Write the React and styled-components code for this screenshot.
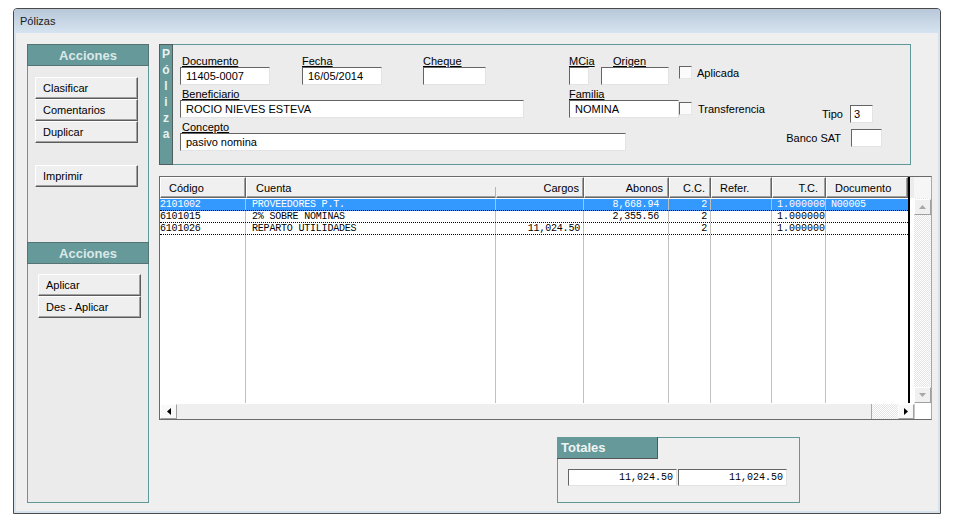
import React from "react";
import styled, { createGlobalStyle } from "styled-components";

const TEAL = "#669999";
const TEAL_BORDER = "#5f9898";
const SANS = `"Liberation Sans", Arial, sans-serif`;
const MONO = `"Liberation Mono", "Courier New", monospace`;

const GlobalStyle = createGlobalStyle`
  html, body { margin: 0; padding: 0; background: #fff; }
  body { font-family: ${SANS}; font-size: 11px; color: #000; }
  * { box-sizing: border-box; }
`;

const Window = styled.div`
  margin: 8px 0 0 13px;
  width: 928px;
  height: 506px;
  border: 1px solid #4a4a4a;
  border-radius: 4px 4px 0 0;
  background: #d8e2ec;
  display: flex;
  flex-direction: column;
  overflow: hidden;
`;

const TitleBar = styled.div`
  height: 24px;
  flex: none;
  background: linear-gradient(#b8c8d9, #d6e3f0);
  display: flex;
  align-items: center;
  padding-left: 6px;
  font-size: 11px;
  color: #1a1a1a;
`;

const Body = styled.div`
  flex: 1;
  margin: 0 2px 2px 2px;
  background: #efefef;
  display: flex;
  align-items: flex-start;
  padding: 11px 6px 0 11px;
`;

/* ---------- Left side panel ---------- */
const SidePanel = styled.div`
  width: 122px;
  height: 459px;
  flex: none;
  border: 1px solid ${TEAL_BORDER};
  background: #ebebeb;
  display: flex;
  flex-direction: column;
`;

const PanelHeader = styled.div`
  height: 22px;
  flex: none;
  margin: -1px -1px 0;
  background: ${TEAL};
  border: 1px solid #557373;
  color: #dbe9e9;
  font-weight: bold;
  font-size: 13px;
  display: flex;
  align-items: center;
  justify-content: center;
`;

const ButtonStack = styled.div`
  display: flex;
  flex-direction: column;
  flex: none;
  height: ${(p) => (p.$height ? `${p.$height}px` : "auto")};
  padding: ${(p) => p.$top}px 0 0 ${(p) => p.$left}px;
`;

const ActionButton = styled.div`
  width: 103px;
  height: 22px;
  flex: none;
  margin-top: ${(p) => p.$gap || 0}px;
  background: #efefef;
  border: 1px solid;
  border-color: #ffffff #5c5c5c #5c5c5c #ffffff;
  box-shadow: inset -1px -1px 0 #a0a0a0;
  font-family: ${SANS};
  font-size: 11px;
  color: #000;
  padding-left: 7px;
  display: flex;
  align-items: center;
`;

/* ---------- Main column ---------- */
const Main = styled.div`
  margin-left: 10px;
  display: flex;
  flex-direction: column;
`;

const PolizaPanel = styled.div`
  display: flex;
  width: 752px;
  height: 121px;
  flex: none;
`;

const Strip = styled.div`
  width: 14px;
  flex: none;
  background: ${TEAL};
  border: 1px solid #4f5d5d;
  display: flex;
  flex-direction: column;
  align-items: center;
  padding-top: 1px;
  color: #e8f2f2;
  font-weight: bold;
  font-size: 12px;
  line-height: 16px;
`;

const FormArea = styled.div`
  flex: 1;
  border: 1px solid ${TEAL_BORDER};
  border-left: none;
  background: #ececec;
  padding: 10px 0 0 7px;
  display: flex;
  flex-direction: column;
  gap: 3px;
`;

const FormRow = styled.div`
  display: flex;
  align-items: flex-end;
  height: 30px;
`;

const Field = styled.div`
  display: flex;
  flex-direction: column;
  flex: none;
  width: ${(p) => p.$w}px;
  margin-left: ${(p) => p.$ml || 0}px;
`;

const FieldLabel = styled.div`
  height: 12px;
  line-height: 12px;
  font-size: 11px;
  text-decoration: underline;
  text-underline-offset: 1px;
  padding-left: ${(p) => p.$indent || 0}px;
  white-space: nowrap;
  overflow: visible;
`;

const TextBox = styled.div`
  width: ${(p) => p.$w}px;
  height: ${(p) => p.$h || 18}px;
  flex: none;
  background: #fff;
  border: 1px solid;
  border-color: #646464 #e3e3e3 #e3e3e3 #646464;
  font-family: ${(p) => (p.$mono ? MONO : SANS)};
  font-size: ${(p) => (p.$mono ? "10px" : "11px")};
  padding: 0 ${(p) => (p.$right ? 3 : 0)}px 0 ${(p) => p.$pad ?? 5}px;
  display: flex;
  align-items: center;
  justify-content: ${(p) => (p.$right ? "flex-end" : "flex-start")};
  white-space: nowrap;
  overflow: hidden;
`;

const CheckItem = styled.div`
  display: flex;
  align-items: center;
  gap: ${(p) => p.$gap}px;
  margin-left: ${(p) => p.$ml || 0}px;
  margin-bottom: ${(p) => p.$mb || 0}px;
  font-size: 11px;
  white-space: nowrap;
`;

const CheckBox = styled.div`
  width: 13px;
  height: 13px;
  background: #fbfbfb;
  border: 1px solid;
  border-color: #646464 #e6e6e6 #e6e6e6 #646464;
`;

const InlineField = styled.div`
  display: flex;
  align-items: center;
  gap: ${(p) => p.$gap}px;
  margin-left: auto;
  margin-right: ${(p) => p.$mr}px;
  margin-bottom: ${(p) => p.$mb}px;
  font-size: 11px;
  white-space: nowrap;
`;

/* ---------- Grid ---------- */
const GridFrame = styled.div`
  margin-top: 11px;
  width: 773px;
  height: 244px;
  border: 1px solid #6a6a6a;
  border-right-color: #a8a8a8;
  background: #fff;
  display: flex;
  flex-direction: column;
`;

const GridTop = styled.div`
  flex: 1;
  display: flex;
  min-height: 0;
`;

const Table = styled.div`
  width: 748px;
  display: flex;
  flex-direction: column;
`;

const HeadRow = styled.div`
  height: 21px;
  display: flex;
  flex: none;
  background: #f0f0f0;
`;

const HeadCell = styled.div`
  position: relative;
  width: ${(p) => p.$w}px;
  flex: none;
  background: #f0f0f0;
  border-top: 1px solid #fff;
  border-left: 1px solid ${(p) => (p.$noLeft ? "#f0f0f0" : "#fff")};
  border-right: 1px solid ${(p) => (p.$noRight ? "#f0f0f0" : "#646464")};
  border-bottom: 1px solid #646464;
  box-shadow: inset 0 -1px 0 #a0a0a0
    ${(p) => (p.$noRight ? "" : ", inset -1px 0 0 #a0a0a0")};
  display: flex;
  align-items: center;
  justify-content: ${(p) => (p.$align === "right" ? "flex-end" : "flex-start")};
  padding: 0 ${(p) => (p.$align === "right" ? p.$pad : 0)}px 0
    ${(p) => (p.$align === "right" ? 0 : p.$pad)}px;
  font-size: 11px;
  white-space: nowrap;
  &::after {
    content: "";
    display: ${(p) => (p.$tick ? "block" : "none")};
    position: absolute;
    right: -1px;
    bottom: 0;
    width: 1px;
    height: 10px;
    background: #b4b4b4;
  }
`;

const Rows = styled.div`
  flex: 1;
  display: flex;
  flex-direction: column;
  padding-top: 1px;
`;

const DataRow = styled.div`
  display: flex;
  height: 12px;
  flex: none;
  border-bottom: 1px dotted #000;
  background: ${(p) => (p.$selected ? "#3399ff" : "#fff")};
  color: ${(p) => (p.$selected ? "#fff" : "#000")};
`;

const FillerRow = styled.div`
  display: flex;
  flex: 1;
`;

const DataCell = styled.div`
  width: ${(p) => p.$w}px;
  flex: none;
  border-right: 1px solid ${(p) => (p.$last ? "transparent" : "#c0c0c0")};
  font-family: ${MONO};
  font-size: 10px;
  letter-spacing: ${(p) => (p.$tight ? "-0.2px" : "0")};
  line-height: 11px;
  white-space: nowrap;
  overflow: hidden;
  text-align: ${(p) => p.$align};
  padding: 0 ${(p) => (p.$align === "right" ? p.$pad : 0)}px 0
    ${(p) => (p.$align === "right" ? 0 : p.$pad)}px;
`;

const BlackLine = styled.div`
  width: 2px;
  flex: none;
  background: #000;
`;

const SideCol = styled.div`
  width: 21px;
  flex: none;
  display: flex;
  flex-direction: column;
`;

const SideHead = styled.div`
  height: 21px;
  flex: none;
  background: linear-gradient(to right, #ececec 0 4px, #f6f6f6 4px);
`;

const SideBody = styled.div`
  flex: 1;
  display: flex;
  padding-left: 4px;
  background: #fff;
`;

const Checker = `
  background-color: #ffffff;
  background-image: repeating-conic-gradient(#e4e4e4 0 25%, #ffffff 0 50%);
  background-size: 2px 2px;
`;

const VScroll = styled.div`
  width: 17px;
  display: flex;
  flex-direction: column;
  padding-top: 1px;
  ${Checker}
`;

const ScrollButton = styled.div`
  width: ${(p) => p.$w || 17}px;
  height: ${(p) => p.$h || 16}px;
  flex: none;
  background: ${(p) => p.$bg || "#f0f0f0"};
  border: 1px solid;
  border-color: #ffffff #a0a0a0 #a0a0a0 #ffffff;
  display: flex;
  align-items: center;
  justify-content: center;
`;

const VTrack = styled.div`
  flex: 1;
`;

const HScroll = styled.div`
  height: 16px;
  flex: none;
  display: flex;
  background: #f0f0f0;
  border-top: 1px solid #ffffff;
`;

const HThumb = styled.div`
  flex: 1;
  background: #efefef;
  border-right: 1px solid #a8a8a8;
`;

const HTrack = styled.div`
  width: 26px;
  flex: none;
  ${Checker}
`;

const Corner = styled.div`
  width: 17px;
  flex: none;
  background: #fff;
  border-left: 1px solid #c8c8c8;
`;

/* ---------- Totales ---------- */
const TotalsBox = styled.div`
  margin: 17px 0 0 398px;
  width: 243px;
  height: 66px;
  border: 1px solid ${TEAL_BORDER};
  display: flex;
  flex-direction: column;
`;

const TotalsTab = styled.div`
  width: 101px;
  height: 22px;
  margin: -1px 0 0 -1px;
  background: ${TEAL};
  border-right: 1px solid #555;
  border-bottom: 1px solid #555;
  color: #eef5f5;
  font-weight: bold;
  font-size: 13px;
  display: flex;
  align-items: center;
  padding-left: 4px;
`;

const TotalsRow = styled.div`
  display: flex;
  gap: 1px;
  margin: 10px 0 0 10px;
`;

/* ---------- Icons ---------- */
const Tri = ({ dir, color }) => {
  const pts = {
    up: "0,4 7,4 3.5,0",
    down: "0,0 7,0 3.5,4",
    left: "4,0 4,7 0,3.5",
    right: "0,0 0,7 4,3.5",
  }[dir];
  const vertical = dir === "up" || dir === "down";
  return (
    <svg width={vertical ? 7 : 4} height={vertical ? 4 : 7} viewBox={vertical ? "0 0 7 4" : "0 0 4 7"}>
      <polygon points={pts} fill={color} />
    </svg>
  );
};

const columns = [
  { title: "Código", w: 86, hAlign: "left", hPad: 8, bAlign: "left", bPad: 0, tight: true },
  { title: "Cuenta", w: 250, hAlign: "left", hPad: 9, bAlign: "left", bPad: 6, noRight: true, tick: true, tight: true },
  { title: "Cargos", w: 88, hAlign: "right", hPad: 4, bAlign: "right", bPad: 3, noLeft: true, tight: true },
  { title: "Abonos", w: 85, hAlign: "right", hPad: 5, bAlign: "right", bPad: 9, tight: true },
  { title: "C.C.", w: 42, hAlign: "right", hPad: 5, bAlign: "right", bPad: 3, tight: true },
  { title: "Refer.", w: 61, hAlign: "left", hPad: 8, bAlign: "left", bPad: 4, tight: true },
  { title: "T.C.", w: 54, hAlign: "right", hPad: 7, bAlign: "left", bPad: 5, tight: false },
  { title: "Documento", w: 82, hAlign: "left", hPad: 8, bAlign: "left", bPad: 5, tight: true },
];

const rows = [
  { selected: true, cells: ["2101002", "PROVEEDORES P.T.", "", "8,668.94", "2", "", "1.000000", "N00005"] },
  { cells: ["6101015", "2% SOBRE NOMINAS", "", "2,355.56", "2", "", "1.000000", ""] },
  { cells: ["6101026", "REPARTO UTILIDADES", "11,024.50", "", "2", "", "1.000000", ""] },
];

export default function App() {
  return (
    <>
      <GlobalStyle />
      <Window>
        <TitleBar>Pólizas</TitleBar>
        <Body>
          <SidePanel>
            <PanelHeader>Acciones</PanelHeader>
            <ButtonStack $height={177} $top={11} $left={7}>
              <ActionButton>Clasificar</ActionButton>
              <ActionButton>Comentarios</ActionButton>
              <ActionButton>Duplicar</ActionButton>
              <ActionButton $gap={22}>Imprimir</ActionButton>
            </ButtonStack>
            <PanelHeader>Acciones</PanelHeader>
            <ButtonStack $top={10} $left={10}>
              <ActionButton>Aplicar</ActionButton>
              <ActionButton>Des - Aplicar</ActionButton>
            </ButtonStack>
          </SidePanel>

          <Main>
            <PolizaPanel>
              <Strip>
                {["P", "ó", "l", "i", "z", "a"].map((c, i) => (
                  <span key={i}>{c}</span>
                ))}
              </Strip>
              <FormArea>
                <FormRow>
                  <Field $w={90}>
                    <FieldLabel $indent={2}>Documento</FieldLabel>
                    <TextBox $w={90}>11405-0007</TextBox>
                  </Field>
                  <Field $w={80} $ml={32}>
                    <FieldLabel>Fecha</FieldLabel>
                    <TextBox $w={80}>16/05/2014</TextBox>
                  </Field>
                  <Field $w={63} $ml={41}>
                    <FieldLabel>Cheque</FieldLabel>
                    <TextBox $w={63} />
                  </Field>
                  <Field $w={20} $ml={83}>
                    <FieldLabel>MCia</FieldLabel>
                    <TextBox $w={20} />
                  </Field>
                  <Field $w={68} $ml={12}>
                    <FieldLabel $indent={12}>Origen</FieldLabel>
                    <TextBox $w={68} />
                  </Field>
                  <CheckItem $ml={10} $mb={6} $gap={5}>
                    <CheckBox />
                    Aplicada
                  </CheckItem>
                </FormRow>
                <FormRow>
                  <Field $w={344}>
                    <FieldLabel $indent={2}>Beneficiario</FieldLabel>
                    <TextBox $w={344}>ROCIO NIEVES ESTEVA</TextBox>
                  </Field>
                  <Field $w={110} $ml={45}>
                    <FieldLabel>Familia</FieldLabel>
                    <TextBox $w={110}>NOMINA</TextBox>
                  </Field>
                  <CheckItem $ml={0} $mb={3} $gap={6}>
                    <CheckBox />
                    Transferencia
                  </CheckItem>
                  <InlineField $gap={7} $mr={37} $mb={-5}>
                    Tipo
                    <TextBox $w={23} $pad={3}>3</TextBox>
                  </InlineField>
                </FormRow>
                <FormRow>
                  <Field $w={446}>
                    <FieldLabel $indent={2}>Concepto</FieldLabel>
                    <TextBox $w={446}>pasivo nomina</TextBox>
                  </Field>
                  <InlineField $gap={10} $mr={28} $mb={4}>
                    Banco SAT
                    <TextBox $w={31} />
                  </InlineField>
                </FormRow>
              </FormArea>
            </PolizaPanel>

            <GridFrame>
              <GridTop>
                <Table>
                  <HeadRow>
                    {columns.map((c) => (
                      <HeadCell
                        key={c.title}
                        $w={c.w}
                        $align={c.hAlign}
                        $pad={c.hPad}
                        $noRight={c.noRight}
                        $noLeft={c.noLeft}
                        $tick={c.tick}
                      >
                        {c.title}
                      </HeadCell>
                    ))}
                  </HeadRow>
                  <Rows>
                    {rows.map((r, ri) => (
                      <DataRow key={ri} $selected={r.selected}>
                        {columns.map((c, ci) => (
                          <DataCell
                            key={ci}
                            $w={c.w}
                            $align={c.bAlign}
                            $pad={c.bPad}
                            $tight={c.tight}
                            $last={ci === columns.length - 1}
                          >
                            {r.cells[ci]}
                          </DataCell>
                        ))}
                      </DataRow>
                    ))}
                    <FillerRow>
                      {columns.map((c, ci) => (
                        <DataCell key={ci} $w={c.w} $align="left" $pad={0} $last={ci === columns.length - 1} />
                      ))}
                    </FillerRow>
                  </Rows>
                </Table>
                <BlackLine />
                <SideCol>
                  <SideHead />
                  <SideBody>
                    <VScroll>
                      <ScrollButton>
                        <Tri dir="up" color="#a8a8a8" />
                      </ScrollButton>
                      <VTrack />
                      <ScrollButton>
                        <Tri dir="down" color="#a8a8a8" />
                      </ScrollButton>
                    </VScroll>
                  </SideBody>
                </SideCol>
              </GridTop>
              <HScroll>
                <ScrollButton $w={17} $h={15} $bg="#f8f8f8">
                  <Tri dir="left" color="#000" />
                </ScrollButton>
                <HThumb />
                <HTrack />
                <ScrollButton $w={16} $h={15} $bg="#f8f8f8">
                  <Tri dir="right" color="#000" />
                </ScrollButton>
                <Corner />
              </HScroll>
            </GridFrame>

            <TotalsBox>
              <TotalsTab>Totales</TotalsTab>
              <TotalsRow>
                <TextBox $w={109} $h={17} $mono $right $pad={0}>11,024.50</TextBox>
                <TextBox $w={109} $h={17} $mono $right $pad={0}>11,024.50</TextBox>
              </TotalsRow>
            </TotalsBox>
          </Main>
        </Body>
      </Window>
    </>
  );
}
